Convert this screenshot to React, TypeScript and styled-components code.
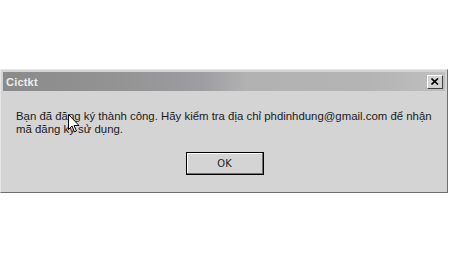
import React from 'react';
import styled, { createGlobalStyle } from 'styled-components';

const GlobalStyle = createGlobalStyle`
    html, body {
        margin: 0;
        padding: 0;
        background: #ffffff;
        font-family: 'Liberation Sans', Arial, sans-serif;
    }
`;

const Page = styled.div`
    width: 450px;
    height: 267px;
    padding-top: 69px;
    box-sizing: border-box;
`;

const Dialog = styled.div`
    position: relative;
    width: 448px;
    height: 124px;
    box-sizing: border-box;
    background: #d4d4d4;
    border-top: 1px solid #e6e6e6;
    border-left: 1px solid #e6e6e6;
    border-right: 1px solid #6e6e6e;
    border-bottom: 1px solid #6e6e6e;
    padding: 2px;
    display: flex;
    flex-direction: column;
`;

const TitleBar = styled.div`
    height: 19px;
    display: flex;
    align-items: center;
    justify-content: space-between;
    padding: 0 2px 0 3px;
    background: linear-gradient(
        to right,
        #8a8a8a 0%,
        #939393 25%,
        #9d9da2 45%,
        #b2b2b2 55%,
        #b4b4b4 83%,
        #bfbfbf 100%
    );
`;

const Title = styled.span`
    color: #ececec;
    font-weight: bold;
    font-size: 11px;
    letter-spacing: 0.2px;
`;

const CloseButton = styled.div`
    width: 16px;
    height: 14px;
    box-sizing: border-box;
    background: #d4d4d4;
    border-top: 1px solid #ffffff;
    border-left: 1px solid #ffffff;
    border-right: 1px solid #404040;
    border-bottom: 1px solid #404040;
    display: flex;
    align-items: center;
    justify-content: center;
`;

const Body = styled.div`
    flex: 1;
    display: flex;
    flex-direction: column;
    padding: 19px 10px 0 13px;
`;

const Message = styled.p`
    margin: 0;
    font-size: 11.4px;
    line-height: 13px;
    color: #1a1a1a;
`;

const Actions = styled.div`
    display: flex;
    justify-content: center;
    margin-top: 16px;
    padding-right: 2px;
`;

const OkButton = styled.button`
    width: 78px;
    height: 23px;
    box-sizing: border-box;
    background: #d4d4d4;
    border: 1px solid #000000;
    box-shadow: inset -1px -1px 0 #6e6e6e, inset 1px 1px 0 #ffffff;
    font-family: 'DejaVu Sans Condensed', 'Liberation Sans Narrow', sans-serif;
    font-size: 11px;
    color: #222222;
    padding: 0;
`;

const Cursor = styled.svg`
    position: absolute;
    left: 67px;
    top: 44px;
`;

const App = () => {
    return (
        <Page>
            <GlobalStyle />
            <Dialog>
                <TitleBar>
                    <Title>Cictkt</Title>
                    <CloseButton>
                        <svg width="8" height="7" viewBox="0 0 8 7">
                            <path
                                d="M0.5 0.5 L7 6.5 M7 0.5 L0.5 6.5"
                                stroke="#000"
                                strokeWidth="1.6"
                            />
                        </svg>
                    </CloseButton>
                </TitleBar>
                <Body>
                    <Message>
                        Bạn đã đăng ký thành công. Hãy kiểm tra địa chỉ
                        phdinhdung@gmail.com để nhận
                        <br />
                        mã đăng ký sử dụng.
                    </Message>
                    <Actions>
                        <OkButton>OK</OkButton>
                    </Actions>
                </Body>
                <Cursor width="12" height="19" viewBox="0 0 12 19">
                    <path
                        d="M0.5 0.5 L0.5 15.5 L4 12 L6.5 18 L8.5 17 L6 11.5 L11 11.5 Z"
                        fill="#fff"
                        stroke="#000"
                        strokeWidth="1"
                    />
                </Cursor>
            </Dialog>
        </Page>
    );
};

export default App;
